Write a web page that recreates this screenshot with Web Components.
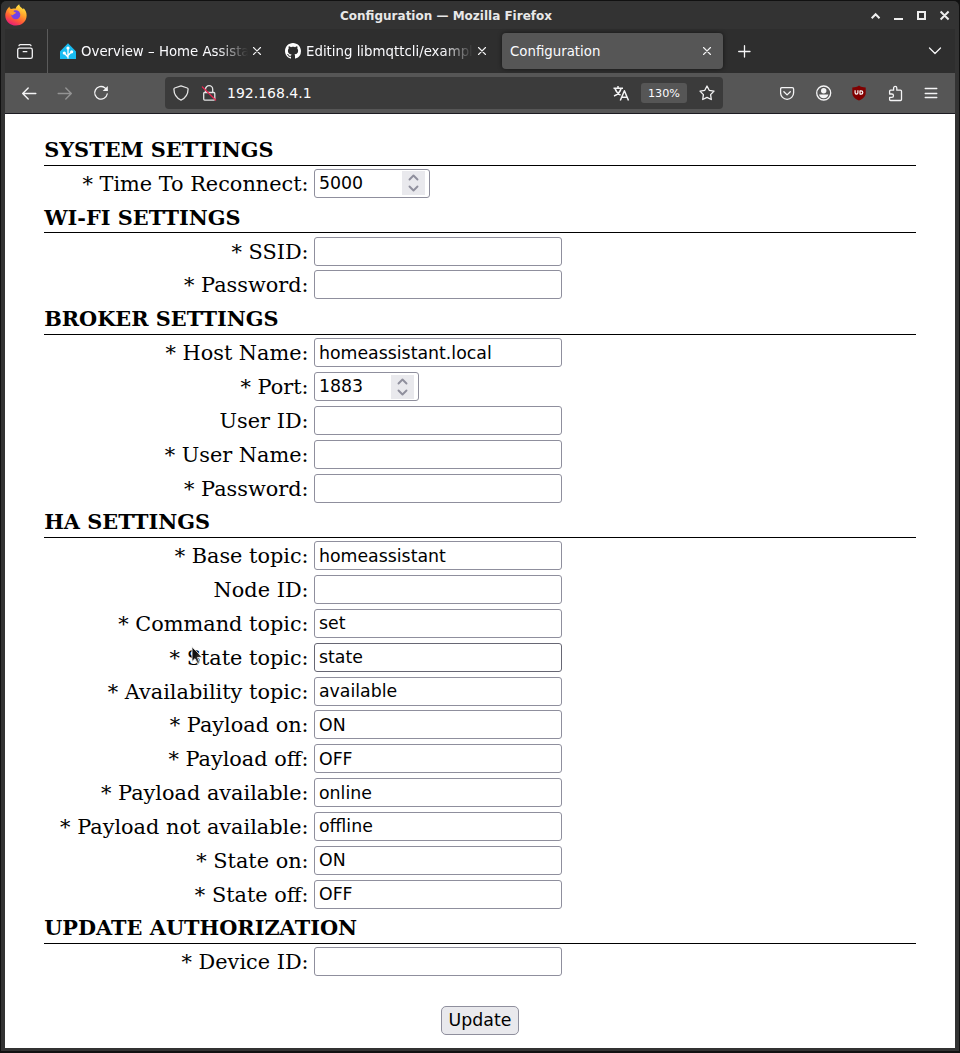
<!DOCTYPE html>
<html lang="en">
<head>
<meta charset="utf-8">
<title>Configuration</title>
<style>html,body{margin:0;height:1053px;overflow:hidden;background:#111}</style>
</head>
<body>
<browser-window>
  <title-bar slot="title">Configuration — Mozilla Firefox</title-bar>
  <tab-strip slot="tabs">
    <browser-tab style="width:220px" icon="home">Overview – Home Assistant</browser-tab>
    <browser-tab style="width:217px" icon="github">Editing libmqttcli/examples</browser-tab>
    <browser-tab style="width:221px" active>Configuration</browser-tab>
  </tab-strip>
  <nav-bar slot="nav">192.168.4.1</nav-bar>
  <settings-form></settings-form>
</browser-window>
<pointer-arrow></pointer-arrow>
<script>
const svg = (w, h, body, extra = '') =>
  `<svg width="${w}" height="${h}" viewBox="0 0 ${w} ${h}" fill="none" stroke="#f4f4f5" stroke-width="1.3" stroke-linecap="round" stroke-linejoin="round" ${extra}>${body}</svg>`;

const icons = {
  fox: svg(22, 22, `<defs><linearGradient id="g" x1=".8" y1="0" x2=".3" y2="1"><stop offset="0" stop-color="#fff14a"/><stop offset=".4" stop-color="#ffa52b"/><stop offset=".7" stop-color="#ff5a36"/><stop offset="1" stop-color="#e8187c"/></linearGradient></defs>
    <path fill="url(#g)" stroke="none" d="M1 8C1.500 5.500 3 4 4.500 2.500c0 1.500.5 2 1.500 2.500 1.500-.6 3-.8 4.500-.2C11 3 12.500 1.500 14.200.3c.2 2.700 2.300 3.200 3.800 5C18.500 5 18.600 4.500 18.600 4c2.500 2.700 3.500 6 2.800 9.500C20.500 18 16.500 21.500 11 21.500 5 21.500.2 17 .3 11.500.3 10 .5 9 1 8z"/>
    <circle cx="10.800" cy="10.800" r="4.500" fill="#7542e5" stroke="none"/><path d="M4 7c2-1.500 4-1 5 .7 1 .3 2 .5 2 1.100 0 1-2.500 1-3 2.500-2-.3-4-2-4-4.300z" fill="#ff9a2c" stroke="none"/>`),
  home: svg(16, 16, `<path fill="#18bcf2" stroke="none" d="M8 .2 15.600 8c.3.400.4.800.4 1.300V16H0V9.300c0-.5.100-.9.400-1.300z"/><path stroke="#fff" stroke-width="1.300" d="M8 5v10M8 14l-3.700-3.700M8 12.500l3.700-3.700"/><g fill="#fff" stroke="none"><circle cx="8" cy="5" r="1.600"/><circle cx="4.300" cy="10" r="1.600"/><circle cx="11.700" cy="8.800" r="1.600"/></g>`),
  github: svg(16, 16, `<path fill="#fff" stroke="none" d="M8 0C3.580 0 0 3.580 0 8c0 3.540 2.290 6.530 5.470 7.590.4.070.55-.17.55-.38 0-.19-.01-.82-.01-1.490-2.010.37-2.530-.49-2.690-.94-.09-.23-.48-.94-.82-1.130-.28-.15-.68-.52-.01-.53.63-.01 1.080.58 1.230.82.72 1.210 1.870.87 2.330.66.070-.52.28-.87.51-1.070-1.780-.2-3.640-.89-3.640-3.950 0-.87.31-1.590.82-2.150-.08-.2-.36-1.020.08-2.120 0 0 .67-.21 2.200.82.640-.18 1.320-.27 2-.27s1.360.09 2 .27c1.530-1.040 2.200-.82 2.200-.82.440 1.100.16 1.920.08 2.120.51.56.82 1.270.82 2.150 0 3.070-1.870 3.750-3.650 3.950.29.25.54.73.54 1.480 0 1.070-.01 1.930-.01 2.200 0 .21.15.46.55.38A8.010 8.010 0 0 0 16 8c0-4.420-3.580-8-8-8z"/>`),
  close: svg(10, 10, `<path stroke-width="1.100" d="m1.500 1.500 7 7m0-7-7 7"/>`),
  library: svg(18, 18, `<rect x="1.700" y="6.200" width="14.600" height="10.200" rx="1.700"/><path d="M3 3.700q.2-1 1.300-1h9.400q1.100 0 1.300 1M7.200 9.700h3.600"/>`),
  plus: svg(14, 14, `<path d="M7.500 1.700v11.300M1.700 7.500h11.300"/>`),
  down: svg(14, 10, `<path d="m1.500 2 5.500 5.500L12.500 2"/>`),
  back: svg(16, 16, `<path stroke-width="1.400" d="M14.800 8.500H1.700M7.200 3 1.700 8.500l5.500 5.500"/>`),
  fwd: svg(16, 16, `<path stroke="#949494" stroke-width="1.400" d="M1.200 8.500h13.100M8.800 3 14.300 8.500l-5.500 5.500"/>`),
  reload: svg(16, 16, `<path d="M14.200 9A6.300 6.300 0 1 1 11.800 2.800L14 5"/><path d="M14.800 1v5H9.700z" fill="#f4f4f5" stroke="none"/>`),
  shield: svg(16, 16, `<path stroke="#e4e4e4" d="M8 .9 14.300 3c.6.200.8.600.8 1.100-.1 5.200-2.300 9-7.100 11-4.800-2-7-5.800-7.100-11 0-.5.200-.9.800-1.100z"/>`),
  lock: svg(16, 18, `<path stroke="#e4e4e4" d="M4.500 8.500V5.300a3.600 3.600 0 0 1 7.200 0v3.200M3.500 8.500h9.300q1 0 1 1v5.600q0 1-1 1H3.700q-1 0-1-1V9.500q0-1 .8-1z"/><path stroke="#e22850" stroke-width="1.300" d="m1.400 3 13.200 13"/>`),
  translate: svg(17, 17, `<path stroke-linecap="butt" stroke-width="1.500" d="M.5 3.300h9.500M5 1v2.300M2 3.500C3 6.700 5.500 9 7.500 10M8 3.500C7.300 7 4 9.800 1 11M7.300 15.500 11.400 5.700 15.500 15.500M8.700 12.200h5.400"/>`),
  star: svg(17, 16, `<path d="m8 1 2.200 4.300 4.800.8-3.400 3.500.7 4.900-4.300-2.200-4.300 2.200.7-4.900L1 6.100l4.800-.8z"/>`),
  pocket: svg(15, 15, `<path d="M2 1.700h10.200q1.400 0 1.400 1.400v3.700a6.500 6.500 0 0 1-13 0V3.100q0-1.400 1.400-1.400zM3.900 5.800l3.200 3.100 3.200-3.100"/>`),
  account: svg(16, 16, `<circle cx="7.700" cy="8" r="7"/><g fill="#f4f4f5" stroke="none"><circle cx="7.700" cy="5.800" r="2.700"/><path d="M3 9.500h9.400q-.8 3.600-4.700 3.700-3.900-.1-4.700-3.700z"/></g>`),
  ublock: svg(14, 16, `<path fill="#800000" stroke="none" d="M7 .5C9 2 11 2.300 13.700 2.500v5.200c0 4-3 6.300-6.700 7.900C3.300 14 .3 11.700.3 7.700V2.500C3 2.300 5 2 7 .5z"/><path stroke="#fff" stroke-width="1.200" stroke-linecap="butt" d="M3.100 5.300v2.500q0 1.400 1.400 1.400t1.400-1.400V5.300M8 5.900h1.100q1.700 0 1.700 1.600T9.100 9.100H8z"/>`),
  puzzle: svg(15, 17, `<path d="M2.600 5.200h3V3a1.600 1.600 0 0 1 3.200 0v2.200h3.700q1 0 1 1v8.300q0 1-1 1H2.600q-1 0-1-1v-2.100h2.200a1.700 1.700 0 0 0 0-3.400H1.600V6.200q0-1 1-1z"/>`),
  menu: svg(14, 12, `<path d="M1.200 1.500h11.600M1.200 6.500h11.600M1.200 10.500h11.600"/>`),
  winctl: svg(82, 14, `<g stroke-linecap="butt" stroke-linejoin="miter" stroke-width="2" stroke="#eee"><path d="m1.700 10.200 3.900-4 3.900 4M24 11h9M48 4h7v7h-7zM70.600 3.500l8 8m0-8-8 8"/></g>`),
  spin: svg(11, 18, `<path stroke="#8f8f9d" stroke-width="1.900" d="m1.500 5.500 4-4 4 4M1.500 12.500l4 4 4-4"/>`)
};

const define = (name, render) => customElements.define(name, class extends HTMLElement {
  connectedCallback() {
    if (this.shadowRoot) return;
    this.attachShadow({ mode: 'open' }).innerHTML = '<style>*{box-sizing:border-box}svg{display:block;flex:none}</style>' + render(this);
  }
});

define('ui-icon', el => `<style>:host{display:block;flex:none}</style>${icons[el.getAttribute('name')]}`);

define('browser-window', () => `<style>
  :host{display:flex;flex-direction:column;width:960px;height:1053px;box-sizing:border-box;background:#333;
    border:1px solid #111;border-bottom-width:2px;border-radius:6px 6px 2px 2px;font-family:"DejaVu Sans",sans-serif;color:#fbfbfe}
  .inner{margin:0 4px 3px;flex:1;display:flex;flex-direction:column}
  main{flex:1;background:#fff;border-top:1px solid #1c1b22;color:#000}
  </style><slot name="title"></slot><div class="inner"><slot name="tabs"></slot><slot name="nav"></slot><main><slot></slot></main></div>`);

define('title-bar', () => `<style>
  :host{display:grid;grid-template-columns:100px 1fr 100px;height:28px;align-items:center;font:bold 12px "DejaVu Sans",sans-serif;color:#e8e8e8;flex:none}
  .fox{padding-left:4px}.w{justify-self:end;padding-right:7px}
  .t{text-align:center;white-space:nowrap;padding:2px 68px 0 0}
  </style><ui-icon class="fox" name="fox"></ui-icon><span class="t"><slot></slot></span><ui-icon class="w" name="winctl"></ui-icon>`);

define('tab-strip', () => `<style>
  :host{display:flex;height:44px;background:#2e2e2e;align-items:center;flex:none}
  .lib{width:43px;height:44px;border-right:1px solid #5b5b5b;padding:13px 0 0 11px;margin-right:9px}
  .tabs{display:flex;gap:4px}.plus{margin:0 0 0 14px}.down{margin-left:auto;margin-right:13px}
  </style><div class="lib"><ui-icon name="library"></ui-icon></div><div class="tabs"><slot></slot></div>
  <ui-icon class="plus" name="plus"></ui-icon><ui-icon class="down" name="down"></ui-icon>`);

define('browser-tab', el => `<style>
  :host{display:flex;height:36px;box-sizing:border-box;align-items:center;padding:0 11px 0 8px;border-radius:4px;font:13.333px "DejaVu Sans",sans-serif}
  :host([active]){background:#565656;box-shadow:0 0 4px #0008}
  :host([icon=home]){padding:0 15px 0 3px}:host([icon=github]){padding:0 11px 0 4px}
  ui-icon{margin-right:5px}
  .t{flex:1;overflow:hidden;white-space:nowrap;line-height:20px;padding:2px 0 0}
  :host([icon]) .t{-webkit-mask-image:linear-gradient(90deg,#000 calc(100% - 30px),#0000);mask-image:linear-gradient(90deg,#000 calc(100% - 30px),#0000)}
  .x{margin:0 0 0 4px}
  </style>${el.hasAttribute('icon') ? `<ui-icon name="${el.getAttribute('icon')}"></ui-icon>` : ''}<span class="t"><slot></slot></span><ui-icon class="x" name="close"></ui-icon>`);

define('nav-bar', () => `<style>
  :host{display:flex;height:40px;background:#565656;align-items:center;flex:none;padding:0 17px 0 16px}
  .nav{display:flex;gap:20px;width:144px}
  .url{width:558px;height:32px;background:#3b3b3b;border-radius:4px;display:flex;align-items:center;padding:0 7px 0 8px;font-size:14px}
  .lock{margin:0 10px 0 12px}.addr{flex:1}
  .zoom{width:46px;height:20px;border-radius:3px;background:#565656;font-size:11.200px;line-height:21px;text-align:center;margin:0 12px 0 11px}
  .tools{margin-left:auto;display:flex;align-items:center;gap:21px}
  .ub{margin:0 1px 0 -1px}
  </style><div class="nav"><ui-icon name="back"></ui-icon><ui-icon name="fwd"></ui-icon><ui-icon name="reload"></ui-icon></div>
  <div class="url"><ui-icon name="shield"></ui-icon><ui-icon class="lock" name="lock"></ui-icon><span class="addr"><slot></slot></span>
  <ui-icon name="translate"></ui-icon><span class="zoom">130%</span><ui-icon name="star"></ui-icon></div>
  <div class="tools"><ui-icon name="pocket"></ui-icon><ui-icon name="account"></ui-icon><ui-icon class="ub" name="ublock"></ui-icon><ui-icon name="puzzle"></ui-icon><ui-icon name="menu"></ui-icon></div>`);

define('settings-section', el => `<style>
  :host{display:block}
  h2{margin:0;height:33.850px;border-bottom:1px solid #000;padding-left:.2px;font:bold 20.830px/36px "DejaVu Serif",serif}
  </style><h2>${el.getAttribute('heading')}</h2><slot></slot>`);

define('settings-field', el => {
  const spin = el.getAttribute('spin');
  return `<style>
  :host{display:flex;height:33.850px;box-sizing:border-box;padding-top:1.600px;align-items:center}
  .label{width:265px;margin-right:5px;padding-right:.4px;text-align:right;white-space:nowrap;font:20.830px/34px "DejaVu Serif",serif;padding-top:1px}
  .box{width:${spin || 248}px;height:29px;border:1px solid #8f8f9d;border-radius:3px;display:flex;align-items:center;justify-content:space-between;padding:0 4px;font:17.333px/25px "DejaVu Sans",sans-serif;background:#fff}
  :host([hover]) .box{border-color:#676774}
  .val{padding-top:.9px}
  .sp{width:23px;height:24px;background:#e9e9ed;display:flex;align-items:center;justify-content:center}
  </style><span class="label">${el.getAttribute('label')}</span><div class="box"><span class="val"><slot></slot></span>${spin ? '<span class="sp"><ui-icon name="spin"></ui-icon></span>' : ''}</div>`;
});

define('update-button', () => `<style>
  :host{display:flex;justify-content:center;padding-top:28px}
  button{width:78px;height:29px;padding:0;border:1px solid #8f8f9d;border-radius:5px;background:#e9e9ed;color:#000;font:17.333px/25px "DejaVu Sans",sans-serif}
  </style><button><slot></slot></button>`);

const sections = [
  ['SYSTEM SETTINGS', [['* Time To Reconnect:', '5000', 116]]],
  ['WI-FI SETTINGS', [['* SSID:', ''], ['* Password:', '']]],
  ['BROKER SETTINGS', [['* Host Name:', 'homeassistant.local'], ['* Port:', '1883', 105], ['User ID:', ''], ['* User Name:', ''], ['* Password:', '']]],
  ['HA SETTINGS', [['* Base topic:', 'homeassistant'], ['Node ID:', ''], ['* Command topic:', 'set'], ['* State topic:', 'state'], ['* Availability topic:', 'available'],
    ['* Payload on:', 'ON'], ['* Payload off:', 'OFF'], ['* Payload available:', 'online'], ['* Payload not available:', 'offline'], ['* State on:', 'ON'], ['* State off:', 'OFF']]],
  ['UPDATE AUTHORIZATION', [['* Device ID:', '']]]
];

define('settings-form', () => `<style>:host{display:block;padding:17.900px 39px 0}</style>` +
  sections.map(([h, fields]) => `<settings-section heading="${h}">${fields.map(([l, v, s]) =>
    `<settings-field label="${l}"${s ? ` spin="${s}"` : ''}${l === '* State topic:' ? ' hover' : ''}>${v}</settings-field>`).join('')}</settings-section>`).join('') +
  `<update-button>Update</update-button>`);

define('pointer-arrow', () => `<style>:host{position:absolute;left:191px;top:646px}</style>
  ${svg(13, 19, '<defs><linearGradient id="p" x1="0" y1="0" x2="1" y2="1"><stop offset=".4" stop-color="#111"/><stop offset="1" stop-color="#777"/></linearGradient></defs><path d="M1 1v14.500l3-2.800 2.500 5 2.300-1.200-2.300-5H11z" fill="url(#p)" stroke="#eee" stroke-width=".9"/>')}`);
</script>
</body>
</html>
